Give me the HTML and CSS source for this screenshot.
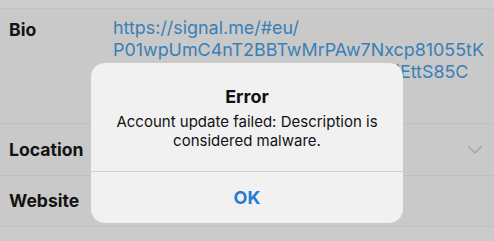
FILE: index.html
```html
<!DOCTYPE html>
<html lang="en">
<head>
<meta charset="utf-8">
<title>Edit profile</title>
<link rel="stylesheet" href="styles.css">
</head>
<body>
<div class="screen">
  <div class="topstrip"></div>
  <div class="row row-bio">
    <div class="label">Bio</div>
    <div class="link">https://signal.me/#eu/<br>P01wpUmC4nT2BBTwMrPAw7Nxcp81055tK<br>3vQmZk9dLrYhWq2xBnTfMwdRkjEttS85C<br>qWe4Rt</div>
  </div>
  <div class="row row-loc">
    <div class="label">Location</div>
    <svg class="chev" width="16" height="10" viewBox="0 0 16 10"><path d="M1.5 1.5 L8 8 L14.5 1.5" fill="none" stroke="#a3a3a3" stroke-width="1.4" stroke-linecap="round" stroke-linejoin="round"/></svg>
  </div>
  <div class="row row-web">
    <div class="label">Website</div>
  </div>
  <div class="rest"></div>

  <div class="dialog">
    <div class="dialog-body">
      <div class="dialog-title">Error</div>
      <div class="dialog-msg">Account update failed: Description is<br>considered malware.</div>
    </div>
    <div class="dialog-btn">OK</div>
  </div>
</div>
</body>
</html>
```
FILE: styles.css
```css
html, body {
  margin: 0;
  padding: 0;
}
body {
  background: #c9c9c9;
  font-family: Inter, "Noto Sans", "Liberation Sans", sans-serif;
  width: 494px;
  height: 241px;
  overflow: hidden;
}
.screen {
  position: relative;
  width: 494px;
  height: 241px;
  display: flex;
  flex-direction: column;
}
.topstrip {
  height: 8px;
  background: #cdcdcd;
  border-bottom: 1px solid #c3c3c3;
}
.row {
  display: flex;
  align-items: flex-start;
  border-bottom: 1px solid #c0c0c0;
  padding-left: 9px;
}
.label {
  width: 104px;
  flex: none;
  font-weight: 700;
  font-size: 17.6px;
  color: #131313;
  line-height: 22px;
}
.row-bio {
  height: 106px;
  padding-top: 8px;
  padding-bottom: 0;
}
.row-bio .label {
  padding-top: 2px;
}
.link {
  font-size: 17.9px;
  line-height: 22px;
  color: #3a7fb6;
  white-space: nowrap;
}
.row-loc {
  height: 51px;
  align-items: center;
  justify-content: space-between;
  padding-right: 11px;
}
.row-web {
  height: 50px;
  align-items: center;
}
.chev {
  display: block;
}
.rest {
  flex: 1;
  background: #cbcbcb;
}
.dialog {
  position: absolute;
  left: 91px;
  top: 63px;
  width: 312px;
  height: 160px;
  background: #f1f1f1;
  border-radius: 14px;
  display: flex;
  flex-direction: column;
  text-align: center;
  color: #111;
}
.dialog-body {
  flex: none;
  height: 109px;
  padding-top: 22px;
  box-sizing: border-box;
  border-bottom: 1px solid #d2d2d2;
}
.dialog-title {
  font-size: 18px;
  font-weight: 700;
  line-height: 24px;
  margin-bottom: 3px;
}
.dialog-msg {
  font-size: 15px;
  line-height: 19px;
  white-space: nowrap;
}
.dialog-btn {
  flex: 1;
  display: flex;
  align-items: center;
  justify-content: center;
  font-size: 18px;
  font-weight: 700;
  color: #2b7bd6;
}
```
